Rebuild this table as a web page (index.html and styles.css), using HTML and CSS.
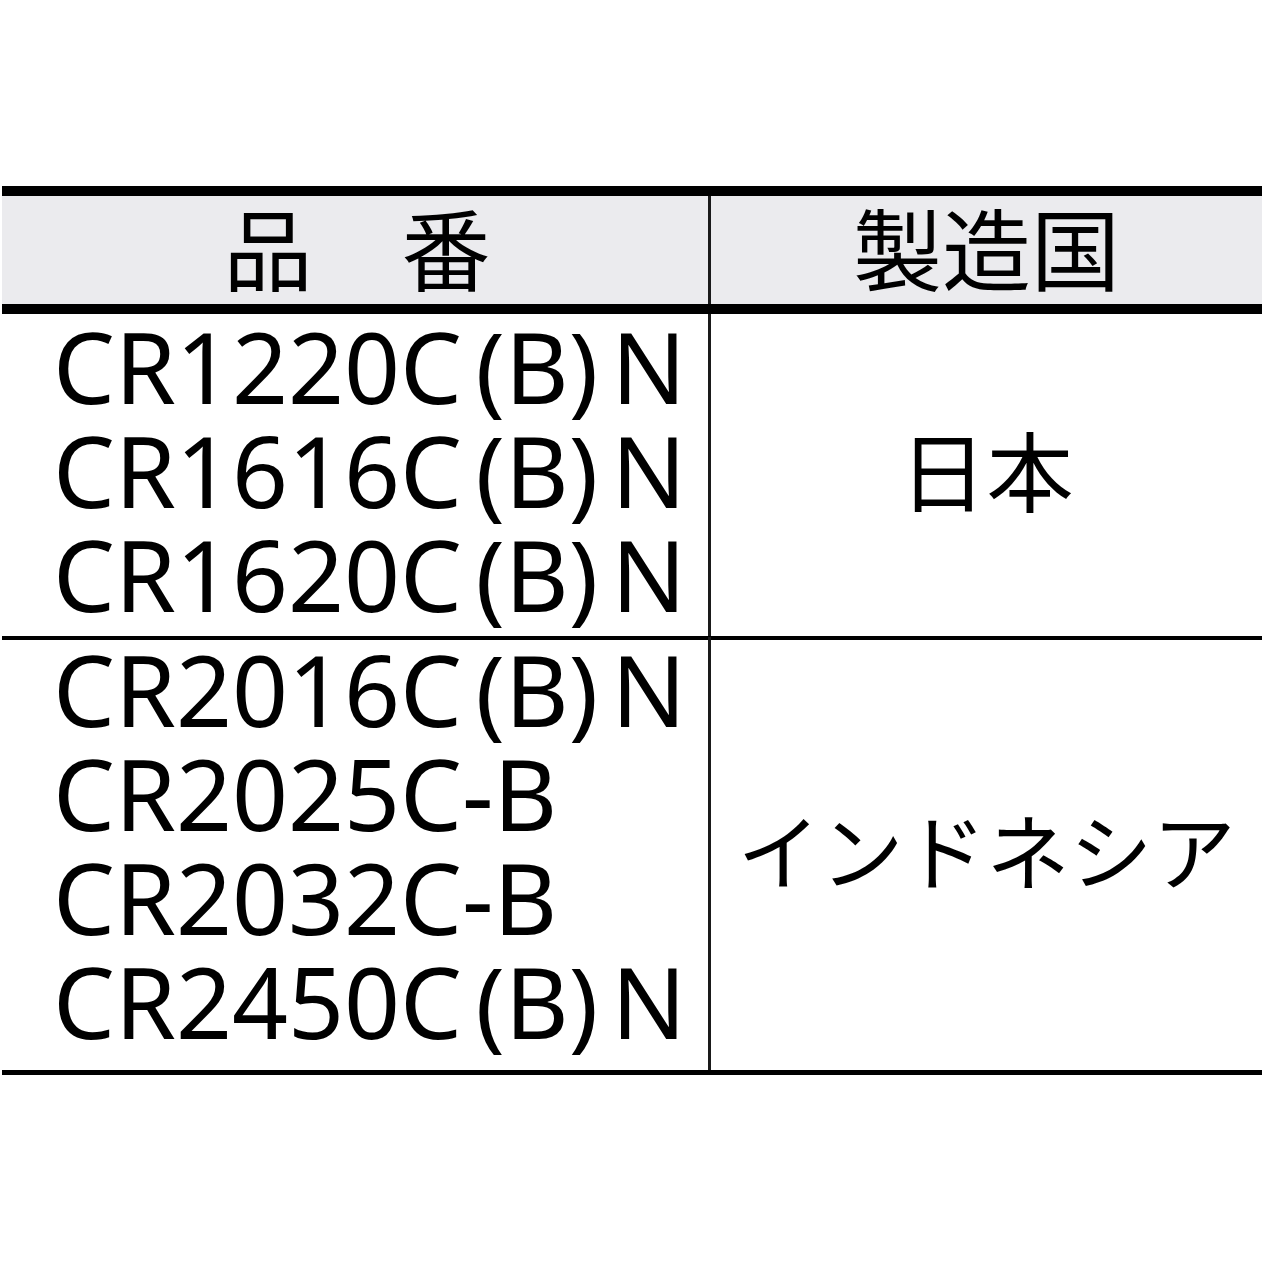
FILE: index.html
```html
<!DOCTYPE html>
<html lang="ja">
<head>
<meta charset="utf-8">
<title>製造国一覧</title>
<link rel="stylesheet" href="styles.css">
</head>
<body>
<div class="sheet">
  <div class="head">
    <div class="hcell hcell-left">品　番</div>
    <div class="hcell hcell-right">製造国</div>
  </div>
  <div class="group group-jp">
    <div class="codes">CR1220C (B) N<br>CR1616C (B) N<br>CR1620C (B) N</div>
    <div class="country country-jp">日本</div>
  </div>
  <div class="group group-id">
    <div class="codes">CR2016C (B) N<br>CR2025C-B<br>CR2032C-B<br>CR2450C (B) N</div>
    <div class="country country-id">インドネシア</div>
  </div>
</div>
</body>
</html>
```

FILE: styles.css
```css
html, body {
  margin: 0;
  padding: 0;
  background: #ffffff;
}

body {
  font-family: "Noto Sans CJK JP", "Noto Sans", sans-serif;
  color: #000000;
}

.sheet {
  margin: 186px 0 0 2px;
  width: 1260px;
  border-top: 10px solid #000000;
  border-bottom: 5px solid #000000;
}

.head {
  display: grid;
  grid-template-columns: 709px 1fr;
  height: 108px;
  background: #ebebee;
  border-bottom: 10px solid #000000;
}

.hcell {
  display: flex;
  align-items: center;
  justify-content: center;
  font-size: 89px;
  line-height: 1;
  padding-bottom: 10px;
}

.hcell-left {
  border-right: 3px solid #1a1a1a;
  padding-left: 4px;
}

.group {
  display: grid;
  grid-template-columns: 709px 1fr;
}

.group-jp {
  height: 322px;
  border-bottom: 4px solid #000000;
}

.group-id {
  height: 430px;
}

.codes {
  border-right: 3px solid #1a1a1a;
  padding-left: 51px;
  font-family: "Noto Sans", "Noto Sans CJK JP", sans-serif;
  font-size: 98px;
  line-height: 104px;
  letter-spacing: 0;
  word-spacing: -12px;
  white-space: nowrap;
}

.group-id .codes {
  margin-top: -3px;
  border-right: 0;
  box-shadow: inset -3px 0 0 #1a1a1a;
}

.country {
  display: flex;
  align-items: center;
  justify-content: center;
  line-height: 1;
  padding-bottom: 14px;
}

.country-jp {
  font-size: 87px;
}

.country-id {
  font-size: 83px;
}
```
